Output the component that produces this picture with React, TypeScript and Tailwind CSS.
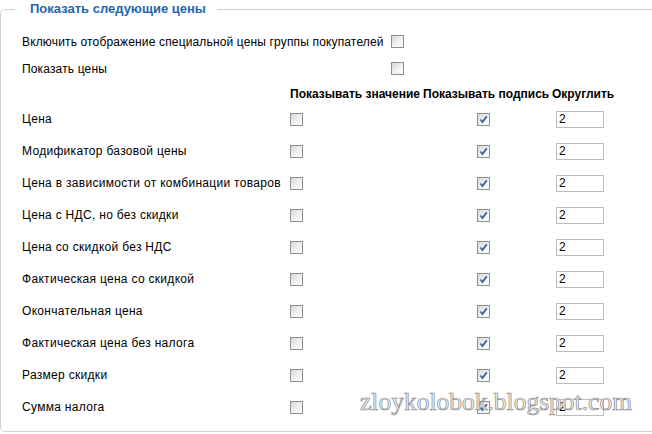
import { Fragment } from "react";

const ROWS = [
  "Цена",
  "Модификатор базовой цены",
  "Цена в зависимости от комбинации товаров",
  "Цена с НДС, но без скидки",
  "Цена со скидкой без НДС",
  "Фактическая цена со скидкой",
  "Окончательная цена",
  "Фактическая цена без налога",
  "Размер скидки",
  "Сумма налога",
];

function Check({ checked = false }: { checked?: boolean }) {
  return (
    <span className="relative inline-block h-[13px] w-[13px] border border-[#8f8f8f] bg-gradient-to-br from-[#d6d6d6] via-[#f0f0f0] to-[#fdfdfd]">
      {checked && (
        <svg viewBox="0 0 11 11" className="absolute inset-0 h-[11px] w-[11px]">
          <path d="M2.5 5.5 L4.5 8 L8.8 2.2" fill="none" stroke="#3f58a8" strokeWidth="1.7" />
        </svg>
      )}
    </span>
  );
}

export default function App() {
  return (
    <div className="relative h-[434px] w-[652px] overflow-hidden bg-white font-['Liberation_Sans',Arial,sans-serif] text-[12px] text-black">
      <fieldset className="h-[432px] w-[680px] rounded-[5px] border border-[#cfcfcf] pl-[21px] pt-[10px]">
        <legend className="-ml-[7px] pl-[15px] pr-[11px] text-[13px] font-bold leading-[18px] text-[#2366ad]">
          Показать следующие цены
        </legend>

        <div className="grid grid-cols-[369px_auto] tracking-[0.15px]">
          <div className="flex h-[27px] items-center">Включить отображение специальной цены группы покупателей</div>
          <div className="flex h-[27px] items-center"><Check /></div>
          <div className="flex h-[27px] items-center">Показать цены</div>
          <div className="flex h-[27px] items-center"><Check /></div>
        </div>

        <div className="grid grid-cols-[268px_133px_129px_auto]">
          <div className="h-[21px]" />
          <div className="flex h-[21px] items-end font-bold">Показывать значение</div>
          <div className="flex h-[21px] items-end font-bold">Показывать подпись</div>
          <div className="flex h-[21px] items-end font-bold">Округлить</div>
          {ROWS.map((label) => (
            <Fragment key={label}>
              <div className="flex h-[32px] items-center tracking-[0.3px]">{label}</div>
              <div className="flex h-[32px] items-center"><Check /></div>
              <div className="flex h-[32px] items-center pl-[54px]"><Check checked /></div>
              <div className="flex h-[32px] items-center pl-[4px]">
                <input
                  readOnly
                  value="2"
                  className="h-[17px] w-[48px] border border-[#bdbdbd] px-[2px] text-[12px] outline-none"
                />
              </div>
            </Fragment>
          ))}
        </div>
      </fieldset>

      <div className="pointer-events-none absolute left-[360px] top-[389px] font-['Liberation_Serif','Times_New_Roman',serif] text-[25.5px] leading-none text-[#f2f2f2] [-webkit-text-stroke:0.7px_#8a8a8a]">
        zloykolobok.blogspot.com
      </div>
    </div>
  );
}
